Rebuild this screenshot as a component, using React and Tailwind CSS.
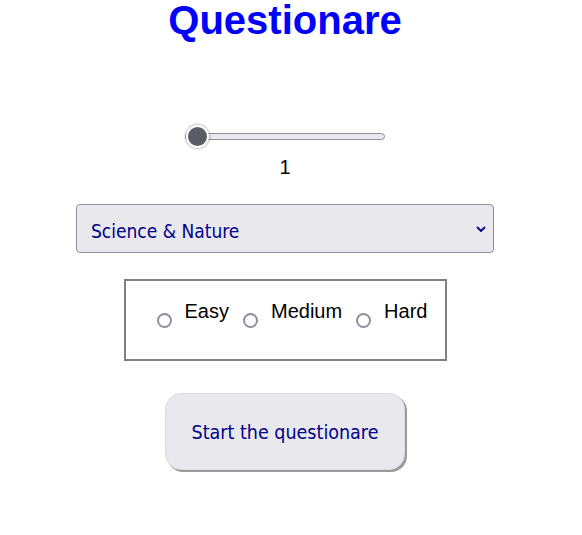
import { useState } from "react";

/**
 * Questionare setup screen: number of questions, category,
 * difficulty and a start button.
 */

const LEVELS = ["Easy", "Medium", "Hard"];

function Chevron() {
  return (
    <svg width="10" height="7" viewBox="0 0 10 7" aria-hidden="true">
      <path d="M1.5 1.5 L5 5 L8.5 1.5" fill="none" stroke="#00008b" strokeWidth="1.8" strokeLinecap="round" strokeLinejoin="round" />
    </svg>
  );
}

export default function App() {
  const [amount, setAmount] = useState(1);
  const [level, setLevel] = useState("");

  return (
    <div className="w-[570px] flex flex-col items-center bg-white font-['Liberation_Sans',Arial,sans-serif] text-black">
      <h1 className="text-[40px] leading-[40px] font-bold text-[#0000ff]">Questionare</h1>

      {/* Question count slider */}
      <input
        type="range"
        min="1"
        max="50"
        value={amount}
        onChange={(e) => setAmount(e.target.value)}
        className="mt-[93px] w-[200px] h-[7px] appearance-none rounded-full border border-[#8f8f9d] bg-[#e9e9ed] outline-none [&::-webkit-slider-thumb]:appearance-none [&::-webkit-slider-thumb]:w-[23px] [&::-webkit-slider-thumb]:h-[23px] [&::-webkit-slider-thumb]:rounded-full [&::-webkit-slider-thumb]:bg-[#5b5b66] [&::-webkit-slider-thumb]:border-2 [&::-webkit-slider-thumb]:border-white [&::-webkit-slider-thumb]:shadow-[0_0_2px_1px_rgba(0,0,0,0.25)]"
      />
      <div className="mt-[16px] text-[20px] leading-[23px]">{amount}</div>

      {/* Category */}
      <div className="relative mt-[25px] w-[418px] h-[49px]">
        <select
          defaultValue="science"
          className="w-full h-full appearance-none rounded-[4px] border border-[#8f8f9d] bg-[#e9e9ed] pl-[14px] pt-[5px] text-[19px] text-[#00008b] font-['DejaVu_Sans_Condensed','DejaVu_Sans',sans-serif] font-stretch-condensed outline-none"
        >
          <option value="science">Science &amp; Nature</option>
          <option value="general">General Knowledge</option>
          <option value="history">History</option>
        </select>
        <span className="pointer-events-none absolute right-[8px] top-[22px]">
          <Chevron />
        </span>
      </div>

      {/* Difficulty */}
      <div className="mt-[26px] w-[323px] h-[82px] border-2 border-[#808080] flex items-start pl-[31px] pt-[19px]">
        {LEVELS.map((l, i) => (
          <label key={l} className={`flex items-start cursor-pointer ${i > 0 ? "ml-[14px]" : ""}`}>
            <input
              type="radio"
              name="level"
              value={l}
              checked={level === l}
              onChange={() => setLevel(l)}
              className="mt-[13px] w-[15px] h-[15px] appearance-none rounded-full border-2 border-[#8f8f9d] bg-white checked:border-[5px] checked:border-[#5b5b66]"
            />
            <span className="ml-[13px] text-[20px] leading-[23px]">{l}</span>
          </label>
        ))}
      </div>

      <button className="mt-[32px] w-[240px] h-[77px] rounded-[16px] border border-[#dcdce2] bg-[#e9e9ed] pt-[3px] shadow-[2px_2px_0_0_#9a9a9a] text-[19.5px] text-[#00008b] font-['DejaVu_Sans_Condensed','DejaVu_Sans',sans-serif] font-stretch-condensed">
        Start the questionare
      </button>

      <div className="h-[65px]" />
    </div>
  );
}
